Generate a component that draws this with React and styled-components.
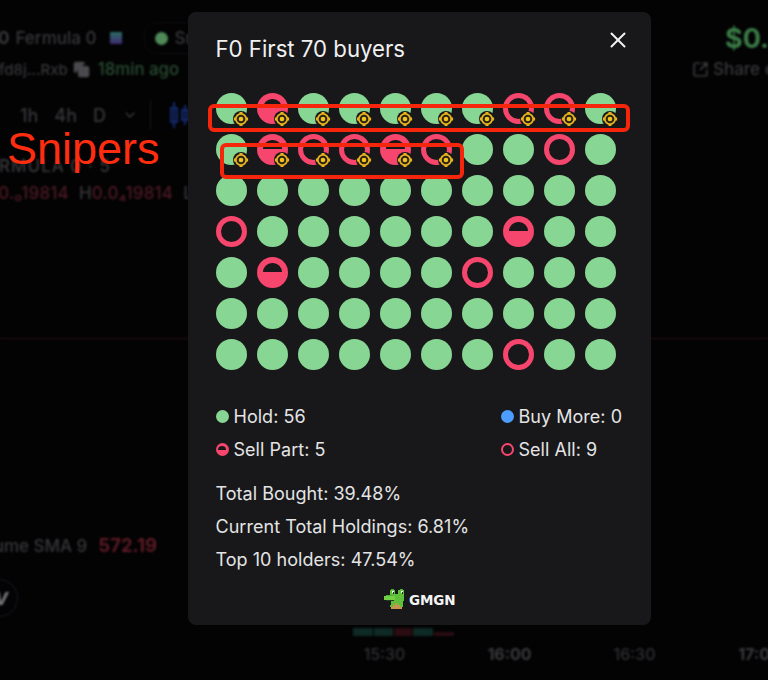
import React from 'react';
import styled, { createGlobalStyle } from 'styled-components';
import { X, SquareArrowOutUpRight, Copy, ChevronDown } from 'lucide-react';

const GlobalStyle = createGlobalStyle`
  html, body {
    margin: 0;
    background: #000;
  }
  body {
    font-family: Inter, "Liberation Sans", sans-serif;
  }
`;

const Page = styled.div`
  position: relative;
  width: 768px;
  height: 680px;
  overflow: hidden;
  background: #030304;
`;

/* the dimmed chart page behind the dialog */
const Backdrop = styled.div`
  display: flex;
  flex-direction: column;
  height: 680px;
  box-sizing: border-box;
  padding-top: 26px;
  filter: blur(0.9px);
  font-weight: 500;
  color: #3a3a3d;
`;

const TopRow = styled.div`
  display: flex;
  align-items: center;
  justify-content: space-between;
  height: 24px;
  margin-bottom: ${(p) => p.$mb || 0}px;
`;

const Group = styled.div`
  display: flex;
  align-items: center;
  gap: ${(p) => p.$gap || 6}px;
  margin-left: ${(p) => p.$ml || 0}px;
`;

const Muted = styled.span`
  color: ${(p) => p.$color || '#37373a'};
  font-size: ${(p) => p.$size || 17}px;
  font-weight: ${(p) => p.$weight || 500};
  margin-left: ${(p) => p.$ml || 0}px;
  white-space: nowrap;
`;

const ChainIcon = styled.span`
  width: 12px;
  height: 12px;
  margin-left: 8px;
  background: linear-gradient(180deg, #2c6b63, #3f2a72);
`;

const Pill = styled.div`
  display: flex;
  align-items: center;
  gap: 6px;
  margin-left: 16px;
  padding: 5px 10px;
  border: 1px solid #0e0e10;
  border-radius: 12px;
`;

const Dot = styled.span`
  width: 13px;
  height: 13px;
  border-radius: 50%;
  background: #4f8a58;
`;

const RightCol = styled.div`
  display: flex;
  flex: none;
  align-items: center;
  gap: 4px;
  width: ${(p) => p.$w}px;
  white-space: nowrap;

  & > svg {
    flex: none;
  }
`;

const Toolbar = styled.div`
  display: flex;
  align-items: center;
  height: 24px;
  margin: 22px 0 0 20px;
  gap: 16px;
`;

const Divider = styled.span`
  width: 1px;
  height: 30px;
  margin-left: -4px;
  background: #1a1a1c;
`;

const CandleIcon = styled.svg`
  flex: none;
  margin-left: 3px;
`;

const Symbol = styled.div`
  margin: 29px 0 0 -26px;
  font-size: 17px;
  line-height: 21px;
  letter-spacing: 1px;
  white-space: nowrap;
`;

const Quote = styled.div`
  display: flex;
  margin: 6px 0 0 -15px;
  line-height: 21px;
  letter-spacing: 0.2px;
  white-space: nowrap;
`;

const PriceLine = styled.div`
  height: 1px;
  margin-top: 134px;
  background: #2c1016;
`;

const Volume = styled.div`
  display: flex;
  align-items: baseline;
  gap: 11px;
  margin: 196px 0 0 -32px;
  line-height: 21px;
  white-space: nowrap;
`;

const ChartLogo = styled.div`
  display: flex;
  flex: none;
  align-items: center;
  justify-content: flex-end;
  width: 38px;
  height: 38px;
  margin: 22px 0 0 -20px;
  padding-right: 9px;
  box-sizing: border-box;
  border: 1px solid #1a1c26;
  border-radius: 50%;
  color: #77777c;
  font-size: 18px;
  font-weight: 800;
  font-style: italic;
`;

const Bars = styled.div`
  display: flex;
  align-items: flex-end;
  gap: 1px;
  height: 8px;
  margin: 11px 0 0 353px;
`;

const Bar = styled.span`
  width: ${(p) => p.$w}px;
  height: ${(p) => p.$h}px;
  background: ${(p) => p.$c};
`;

const Axis = styled.div`
  display: grid;
  grid-template-columns: repeat(4, 125px);
  margin: 8px 0 0 322px;
  font-size: 16px;
  line-height: 20px;
`;

const Tick = styled.span`
  text-align: center;
  font-weight: ${(p) => (p.$bold ? 700 : 500)};
  white-space: nowrap;
  color: ${(p) => (p.$bold ? '#39393c' : '#303033')};
`;

const Modal = styled.div`
  position: absolute;
  left: 188px;
  top: 12px;
  width: 463px;
  height: 613px;
  box-sizing: border-box;
  padding: 25px 27px 0 27.5px;
  border-radius: 8px;
  background: #18181a;
  color: #e4e4e5;
`;

const Head = styled.div`
  display: flex;
  align-items: center;
  justify-content: space-between;
  height: 24px;
`;

const Title = styled.h2`
  margin: 0;
  font-size: 22.2px;
  font-weight: 400;
  line-height: 24px;
  color: #f0f0f1;
`;

const CloseBtn = styled.span`
  display: flex;
  margin-right: -7px;
  margin-top: -18px;
  color: #f2f2f2;
`;

const Buyers = styled.div`
  display: grid;
  grid-template-columns: repeat(10, 31px);
  grid-auto-rows: 31px;
  gap: 10px;
  margin-top: 32px;
`;

const Buyer = styled.div`
  position: relative;
  width: 31px;
  height: 31px;
  border-radius: 50%;
  background: ${(p) => (p.$state === 'hold' ? '#88d693' : p.$state === 'part' ? '#f6466d' : 'transparent')};
  box-shadow: ${(p) => (p.$state === 'all' ? 'inset 0 0 0 5px #f6466d' : 'none')};

  ${(p) =>
    p.$state === 'part' &&
    `&::before {
      content: '';
      position: absolute;
      left: 6px;
      top: 5.5px;
      width: 19px;
      height: 9.5px;
      border-radius: 10px 10px 0 0;
      background: #18181a;
    }`}
`;

const BadgeIcon = styled.svg`
  position: absolute;
  left: 17.5px;
  top: 17.5px;
`;

const Legend = styled.div`
  display: grid;
  grid-template-columns: 285px auto;
  grid-auto-rows: 33px;
  margin-top: 30px;
`;

const LegendItem = styled.div`
  display: flex;
  align-items: center;
  gap: 5px;
  font-size: 18px;
  letter-spacing: 0.03px;
  white-space: nowrap;
`;

const LegendMark = styled.span`
  position: relative;
  box-sizing: border-box;
  flex: none;
  width: 13px;
  height: 13px;
  border-radius: 50%;
  background: ${(p) => (p.$state === 'hold' ? '#88d693' : p.$state === 'buy' ? '#4c9dff' : p.$state === 'part' ? '#f6466d' : 'transparent')};
  border: ${(p) => (p.$state === 'all' ? '2.5px solid #f6466d' : 'none')};

  ${(p) =>
    p.$state === 'part' &&
    `&::before {
      content: '';
      position: absolute;
      left: 2.5px;
      top: 2.5px;
      width: 8px;
      height: 4px;
      border-radius: 4px 4px 0 0;
      background: #18181a;
    }`}
`;

const Stats = styled.div`
  display: flex;
  flex-direction: column;
  margin-top: 11px;
`;

const Stat = styled.div`
  font-size: 18px;
  letter-spacing: 0.03px;
  line-height: 33px;
  white-space: nowrap;
`;

const Brand = styled.div`
  display: flex;
  align-items: center;
  justify-content: center;
  gap: 5px;
  margin-top: 13px;
`;

const BrandName = styled.span`
  font-family: "DejaVu Sans", sans-serif;
  font-size: 13.5px;
  font-weight: 700;
  letter-spacing: -0.1px;
  margin-top: 2px;
  color: #f4f4f4;
`;

const Annotation = styled.div`
  position: absolute;
  left: ${(p) => p.$x}px;
  top: ${(p) => p.$y}px;
  width: ${(p) => p.$w}px;
  height: ${(p) => p.$h}px;
  box-sizing: border-box;
  border: 4px solid #f5260c;
  border-radius: 6px;
`;

const AnnotationLabel = styled.div`
  position: absolute;
  left: 7px;
  top: 123px;
  font-family: "Liberation Sans", sans-serif;
  font-size: 45px;
  line-height: 52px;
  color: #ff2d0f;
`;

const rows = [
  'hphhhhhaah',
  'hpaapahhah',
  'hhhhhhhhhh',
  'ahhhhhhphh',
  'hphhhhahhh',
  'hhhhhhhhhh',
  'hhhhhhhahh',
];

const stateNames = { h: 'hold', p: 'part', a: 'all' };

// sniper badge sits on every buyer of the first row and the first six of the second
const isSniper = (r, c) => r === 0 || (r === 1 && c < 6);

const SniperBadge = () => (
  <BadgeIcon width="16" height="16" viewBox="0 0 16 16">
    <circle cx="8" cy="8" r="8" fill="#18181a" />
    <path d="M8 .9v2.6M8 12.5v2.6M.9 8h2.6M12.5 8h2.6" stroke="#e9b41f" strokeWidth="3" />
    <circle cx="8" cy="8" r="5.2" fill="#2a2414" stroke="#e9b41f" strokeWidth="1.8" />
    <circle cx="8" cy="8" r="2.3" fill="#f2c21f" />
  </BadgeIcon>
);

// pixel art frog of the brand, one rect per run of pixels
const frogPixels = [
  ['#4fae35', 6, 0, 3, 1], ['#4fae35', 14, 0, 3, 1],
  ['#5fbf3a', 5, 1, 5, 5], ['#5fbf3a', 13, 1, 5, 5],
  ['#ffffff', 7, 2, 2, 2], ['#ffffff', 15, 2, 2, 2],
  ['#16301a', 8, 3, 1, 2], ['#16301a', 16, 3, 1, 2],
  ['#5fbf3a', 5, 5, 13, 6], ['#74d045', 0, 7, 10, 4],
  ['#4fae35', 2, 6, 6, 1],
  ['#1f3d1a', 2, 11, 7, 1], ['#5fbf3a', 9, 11, 9, 1],
  ['#5fbf3a', 6, 12, 11, 4],
  ['#5fbf3a', 5, 16, 4, 2], ['#5fbf3a', 13, 16, 4, 2],
  ['#c8924f', 10, 14, 2, 2], ['#c8924f', 8, 16, 6, 2], ['#c8924f', 6, 18, 10, 2],
];

const Frog = () => (
  <svg width="20" height="20" viewBox="0 0 18 20" preserveAspectRatio="none" shapeRendering="crispEdges">
    {frogPixels.map(([fill, x, y, w, h], i) => (
      <rect key={i} fill={fill} x={x} y={y} width={w} height={h} />
    ))}
  </svg>
);

const volumeBars = [
  [20, 8, '#0e2a24'], [19, 8, '#0e2a24'], [18, 8, '#2a0c12'], [20, 8, '#0e2a24'], [20, 4, '#2a0c12'],
];

const App = () => (
  <Page>
    <GlobalStyle />
    <Backdrop>
      <TopRow $mb={7}>
        <Group $ml={-2} $gap={6}>
          <Muted $weight={700}>0</Muted>
          <Muted>Fermula 0</Muted>
          <ChainIcon />
          <Pill>
            <Dot />
            <Muted>Sniper</Muted>
          </Pill>
        </Group>
        <RightCol $w={43}>
          <Muted $size={27} $weight={700} $color="#3b7d47">$0.0</Muted>
        </RightCol>
      </TopRow>
      <TopRow>
        <Group $ml={-1} $gap={5}>
          <Muted $size={15}>fd8j...Rxb</Muted>
          <Copy size={17} color="#4a4a4e" fill="#4a4a4e" />
          <Muted $size={16.8} $color="#2a4e31" $ml={3}>18min ago</Muted>
        </Group>
        <RightCol $w={76}>
          <SquareArrowOutUpRight size={17} color="#444448" />
          <Muted>Share e</Muted>
        </RightCol>
      </TopRow>
      <Toolbar>
        <Muted $size={18}>1h</Muted>
        <Muted $size={18}>4h</Muted>
        <Muted $size={18}>D</Muted>
        <ChevronDown size={16} color="#3a3a3d" />
        <Divider />
        <CandleIcon width="20" height="26" viewBox="0 0 20 26" fill="none" stroke="#14296b" strokeWidth="2">
          <path d="M4 0v26M1 6h6v14H1zM15 3v20M12 8h6v10h-6z" />
        </CandleIcon>
      </Toolbar>
      <Symbol>FORMULA 0 · 5</Symbol>
      <Quote>
        <Muted $color="#4d1a24">O0.₀19814</Muted>
        <Muted $ml={10}>H</Muted>
        <Muted $color="#4d1a24">0.0₄19814</Muted>
        <Muted $ml={10}>L</Muted>
      </Quote>
      <PriceLine />
      <Volume>
        <Muted>Volume SMA 9</Muted>
        <Muted $size={18.5} $color="#5c1a24" $weight={700}>572.19</Muted>
      </Volume>
      <ChartLogo>V</ChartLogo>
      <Bars>
        {volumeBars.map(([w, h, c], i) => (
          <Bar key={i} $w={w} $h={h} $c={c} />
        ))}
      </Bars>
      <Axis>
        <Tick>15:30</Tick>
        <Tick $bold>16:00</Tick>
        <Tick>16:30</Tick>
        <Tick $bold>17:00</Tick>
      </Axis>
    </Backdrop>

    <AnnotationLabel>Snipers</AnnotationLabel>

    <Modal>
      <Head>
        <Title>F0 First 70 buyers</Title>
        <CloseBtn>
          <X size={26} strokeWidth={1.8} />
        </CloseBtn>
      </Head>
      <Buyers>
        {rows.map((row, r) =>
          row.split('').map((s, c) => (
            <Buyer key={`${r}-${c}`} $state={stateNames[s]}>
              {isSniper(r, c) && <SniperBadge />}
            </Buyer>
          )),
        )}
      </Buyers>
      <Legend>
        <LegendItem><LegendMark $state="hold" />Hold: 56</LegendItem>
        <LegendItem><LegendMark $state="buy" />Buy More: 0</LegendItem>
        <LegendItem><LegendMark $state="part" />Sell Part: 5</LegendItem>
        <LegendItem><LegendMark $state="all" />Sell All: 9</LegendItem>
      </Legend>
      <Stats>
        <Stat>Total Bought: 39.48%</Stat>
        <Stat>Current Total Holdings: 6.81%</Stat>
        <Stat>Top 10 holders: 47.54%</Stat>
      </Stats>
      <Brand>
        <Frog />
        <BrandName>GMGN</BrandName>
      </Brand>
    </Modal>

    <Annotation $x={208} $y={104} $w={422} $h={28} />
    <Annotation $x={220} $y={143} $w={244} $h={36} />
  </Page>
);

export default App;
